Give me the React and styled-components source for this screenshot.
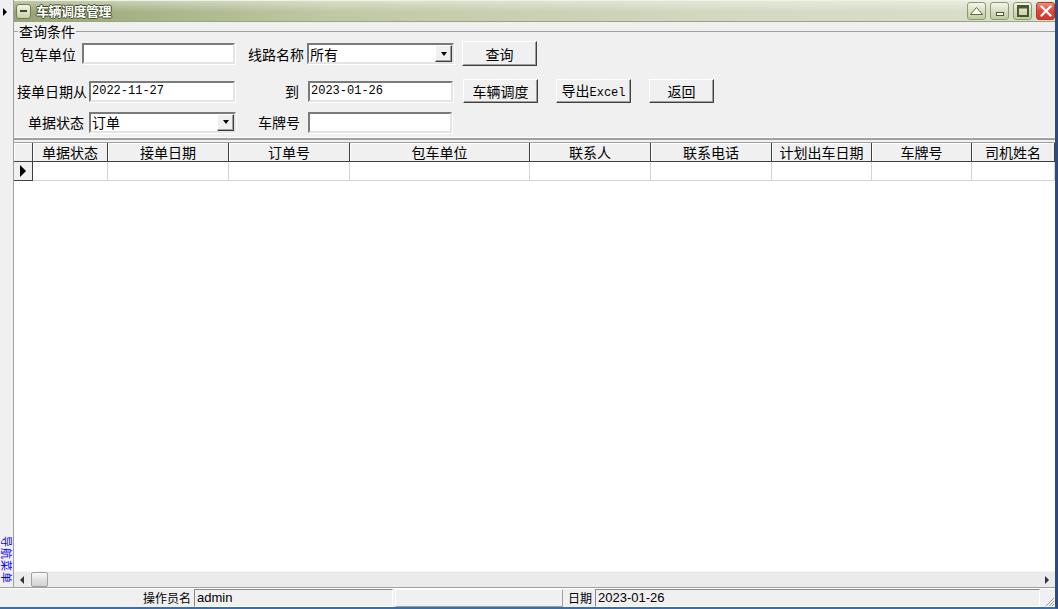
import React from "react"
import styled, { createGlobalStyle } from "styled-components"

const CJK = `"Noto Sans CJK SC", "Noto Sans", sans-serif`
const MONO = `"Liberation Mono", "Noto Sans CJK SC", monospace`
const UI = `"Liberation Sans", "Noto Sans CJK SC", sans-serif`

const GlobalStyle = createGlobalStyle`
  html, body {
    margin: 0;
    padding: 0;
    background: #f0f0f0;
  }
  body {
    font-family: ${CJK};
    font-size: 14px;
    color: #000;
  }
  * {
    box-sizing: border-box;
  }
`

const Frame = styled.div`
  width: 1058px;
  height: 609px;
  display: flex;
  flex-direction: column;
  border-right: 3px solid #2b4c7e;
  border-bottom: 2px solid #3d6fa6;
  background: #f0f0f0;
  overflow: hidden;
`

const Main = styled.div`
  flex: 1;
  display: flex;
  min-height: 0;
`

const NavStrip = styled.div`
  width: 14px;
  flex: none;
  border-right: 1px solid #a0a0a0;
  display: flex;
  flex-direction: column;
  justify-content: space-between;
  align-items: center;
  padding: 8px 0 3px 0;
`

const NavArrow = styled.span`
  width: 0;
  height: 0;
  margin-right: 4px;
  border-left: 4px solid #000;
  border-top: 4px solid transparent;
  border-bottom: 4px solid transparent;
`

const NavText = styled.span`
  writing-mode: vertical-rl;
  text-orientation: sideways;
  color: #0000ff;
  font-size: 11px;
  line-height: 12px;
  letter-spacing: 1px;
  white-space: nowrap;
`

const Window = styled.div`
  flex: 1;
  min-width: 0;
  display: flex;
  flex-direction: column;
`

const TitleBar = styled.div`
  height: 22px;
  flex: none;
  display: flex;
  align-items: center;
  padding-left: 2px;
  border-top: 1px solid #eef1e4;
  border-bottom: 1px solid #9aa47e;
  background:
    linear-gradient(to bottom, rgba(255, 255, 255, 0.4), rgba(255, 255, 255, 0) 55%),
    linear-gradient(to right, #96a473, #bfc8a4 30%, #d4d9c3 70%, #dadfcc);
`

const SysIcon = styled.span`
  width: 15px;
  height: 15px;
  margin-right: 5px;
  border: 1px solid #6f7f4c;
  border-radius: 3px;
  background: linear-gradient(#f2f4e8, #c8d0aa);
  display: flex;
  align-items: center;
  justify-content: center;

  &::after {
    content: "";
    width: 7px;
    height: 2px;
    background: #3e4a24;
  }
`

const Title = styled.span`
  color: #fff;
  font-weight: bold;
  font-size: 13px;
  line-height: 20px;
  letter-spacing: -0.5px;
  text-shadow: 1px 0 0 #3f4a26, -1px 0 0 #3f4a26, 0 1px 0 #3f4a26, 0 -1px 0 #3f4a26;
`

const CaptionGroup = styled.div`
  margin-left: auto;
  display: flex;
  gap: 4px;
`

const CaptionButton = styled.span`
  width: 19px;
  height: 18px;
  border-radius: 3px;
  border: 1px solid ${(p) => (p.$close ? "#b0382c" : "#8d9a6c")};
  background: ${(p) =>
    p.$close
      ? "linear-gradient(#f08a78, #e0463a 50%, #d23a2c)"
      : "linear-gradient(#f4f6ec, #d6dcc0 50%, #c2caa4)"};
  display: flex;
  align-items: center;
  justify-content: center;
`

const Body = styled.div`
  flex: 1;
  min-height: 0;
  display: flex;
  flex-direction: column;
`

const GroupBox = styled.fieldset`
  margin: 2px 0 0 0;
  padding: 0 0 5px 0;
  border: none;
  border-top: 1px solid #a0a0a0;
  border-bottom: 2px solid #a0a0a0;
  box-shadow: inset 0 -1px 0 #fff;
  flex: none;
`

const Legend = styled.legend`
  margin-left: 4px;
  padding: 0 1px;
  font-size: 14px;
  line-height: 14px;
`

const Row = styled.div`
  display: flex;
  align-items: center;
  height: ${(p) => p.$h}px;
  margin-top: ${(p) => p.$mt}px;
`

const Label = styled.span`
  width: ${(p) => p.$w}px;
  flex: none;
  text-align: right;
  padding-right: ${(p) => p.$pr}px;
  font-size: 14px;
  line-height: 16px;
  white-space: nowrap;
`

const Field = styled.div`
  width: ${(p) => p.$w}px;
  height: ${(p) => p.$h || 21}px;
  flex: none;
  display: flex;
  align-items: center;
  background: #fff;
  border-style: solid;
  border-width: 2px;
  border-color: #7a7a7a #e4e4e4 #e4e4e4 #7a7a7a;
  box-shadow: 1px 1px 0 #fff;
  padding-left: 1px;
  overflow: hidden;
  white-space: nowrap;
`

const FieldText = styled.span`
  flex: 1;
  font-family: ${(p) => (p.$mono ? MONO : CJK)};
  font-size: ${(p) => (p.$mono ? 12 : 14)}px;
  line-height: 16px;
`

const DropButton = styled.span`
  width: 17px;
  height: 17px;
  flex: none;
  background: #f0f0f0;
  border-style: solid;
  border-width: 1px;
  border-color: #fff #404040 #404040 #fff;
  box-shadow: inset -1px -1px 0 #a0a0a0;
  display: flex;
  align-items: center;
  justify-content: center;

  &::after {
    content: "";
    border-top: 4px solid #000;
    border-left: 3.5px solid transparent;
    border-right: 3.5px solid transparent;
  }
`

const Button = styled.button`
  width: ${(p) => p.$w}px;
  height: ${(p) => p.$h || 24}px;
  margin-left: ${(p) => p.$ml}px;
  flex: none;
  padding: 0;
  background: #f0f0f0;
  border-style: solid;
  border-width: 1px;
  border-color: #fff #404040 #404040 #fff;
  box-shadow: inset -1px -1px 0 #a0a0a0;
  font-family: ${CJK};
  font-size: 14px;
  line-height: 16px;
  color: #000;
  white-space: nowrap;
`

const Ascii = styled.span`
  font-family: ${MONO};
  font-size: 12px;
`

const Grid = styled.div`
  flex: 1;
  min-height: 0;
  margin-top: 2px;
  border-top: 1px solid #a0a0a0;
  background: #fff;
  overflow: hidden;
`

const Table = styled.table`
  table-layout: fixed;
  border-collapse: separate;
  border-spacing: 0;
  width: 1041px;
`

const HeadCell = styled.th`
  height: 19px;
  padding: 0;
  font-weight: normal;
  font-size: 14px;
  line-height: 17px;
  text-align: center;
  white-space: nowrap;
  overflow: hidden;
  background: #f0f0f0;
  border-right: 1px solid #404040;
  border-bottom: 1px solid #404040;
  box-shadow: inset 1px 1px 0 #fff;
`

const Cell = styled.td`
  height: 19px;
  padding: 0;
  font-size: 0;
  line-height: 0;
  background: ${(p) => (p.$indicator ? "#f0f0f0" : "#fff")};
  border-right: 1px solid ${(p) => (p.$indicator ? "#404040" : "#d4d4d4")};
  border-bottom: 1px solid ${(p) => (p.$indicator ? "#404040" : "#d4d4d4")};
`

const RowPointer = styled.span`
  display: block;
  width: 0;
  height: 0;
  margin-left: 6px;
  border-left: 6px solid #000;
  border-top: 6px solid transparent;
  border-bottom: 6px solid transparent;
`

const ScrollBar = styled.div`
  height: 16px;
  flex: none;
  display: flex;
  align-items: center;
  background: #ebebeb;
  border-top: 1px solid #f6f6f6;
`

const ScrollArrow = styled.span`
  width: 16px;
  height: 15px;
  flex: none;
  display: flex;
  align-items: center;
  justify-content: center;

  &::after {
    content: "";
    border-top: 4px solid transparent;
    border-bottom: 4px solid transparent;
    ${(p) => (p.$right ? "border-left: 4px solid #333;" : "border-right: 4px solid #333;")}
  }
`

const ScrollThumb = styled.span`
  width: 17px;
  height: 15px;
  margin-left: 1px;
  flex: none;
  border: 1px solid #a2a2a2;
  border-radius: 2px;
  background: linear-gradient(#fafafa, #e2e2e2 50%, #d2d2d2);
`

const ScrollTrack = styled.span`
  flex: 1;
`

const StatusBar = styled.div`
  height: 20px;
  flex: none;
  display: flex;
  align-items: stretch;
  border-top: 1px solid #a0a0a0;
  box-shadow: inset 0 1px 0 #fff;
  padding-top: 1px;
  background: #f0f0f0;
`

const StatusLabel = styled.span`
  width: ${(p) => p.$w}px;
  flex: none;
  text-align: right;
  padding-right: 1px;
  font-size: 12px;
  line-height: 18px;
`

const StatusPanel = styled.span`
  width: ${(p) => p.$w}px;
  margin-left: 2px;
  flex: none;
  border-style: solid;
  border-width: 1px;
  border-color: ${(p) => (p.$raised ? "#fff #a0a0a0 #a0a0a0 #fff" : "#8a8a8a #fff #fff #8a8a8a")};
  padding-left: 2px;
  font-family: ${UI};
  font-size: 13px;
  line-height: 16px;
  white-space: nowrap;
`

const Grip = styled.span`
  flex: 1;
  display: flex;
  justify-content: flex-end;
  align-items: flex-end;
`

const columns = [
  { key: "ind", w: 19, title: "" },
  { key: "status", w: 75, title: "单据状态" },
  { key: "date", w: 121, title: "接单日期" },
  { key: "no", w: 121, title: "订单号" },
  { key: "unit", w: 180, title: "包车单位" },
  { key: "contact", w: 121, title: "联系人" },
  { key: "phone", w: 121, title: "联系电话" },
  { key: "plan", w: 100, title: "计划出车日期" },
  { key: "plate", w: 100, title: "车牌号" },
  { key: "driver", w: 83, title: "司机姓名" },
]

const CaptionIcon = ({ kind }) => {
  if (kind === "up")
    return (
      <svg width="13" height="8" viewBox="0 0 13 8">
        <path d="M6.5 0.5 L12.5 7.5 L0.5 7.5 Z" fill="#fff" stroke="#5c6a3c" strokeWidth="1" />
      </svg>
    )
  if (kind === "min")
    return (
      <svg width="10" height="10" viewBox="0 0 10 10">
        <rect x="1.5" y="6.5" width="7" height="3" fill="#fff" stroke="#4a5830" />
      </svg>
    )
  if (kind === "max")
    return (
      <svg width="12" height="12" viewBox="0 0 12 12">
        <rect x="1" y="1" width="10" height="10" fill="none" stroke="#4a5830" strokeWidth="2" />
        <rect x="0.5" y="0.5" width="11" height="3" fill="#4a5830" />
      </svg>
    )
  return (
    <svg width="12" height="12" viewBox="0 0 12 12">
      <path d="M1.5 1.5 L10.5 10.5 M10.5 1.5 L1.5 10.5" stroke="#fff" strokeWidth="2.4" strokeLinecap="round" />
    </svg>
  )
}

const ResizeGrip = () => (
  <svg width="12" height="12" viewBox="0 0 12 12">
    <path d="M11 3 L3 11 M11 6 L6 11 M11 9 L9 11" stroke="#9a9a9a" strokeWidth="1" />
    <path d="M12 4 L4 12 M12 7 L7 12 M12 10 L10 12" stroke="#fff" strokeWidth="1" />
  </svg>
)

export default function App() {
  return (
    <>
      <GlobalStyle />
      <Frame>
        <Main>
          <NavStrip>
            <NavArrow />
            <NavText>导航菜单</NavText>
          </NavStrip>
          <Window>
            <TitleBar>
              <SysIcon />
              <Title>车辆调度管理</Title>
              <CaptionGroup>
                <CaptionButton>
                  <CaptionIcon kind="up" />
                </CaptionButton>
                <CaptionButton>
                  <CaptionIcon kind="min" />
                </CaptionButton>
                <CaptionButton>
                  <CaptionIcon kind="max" />
                </CaptionButton>
                <CaptionButton $close>
                  <CaptionIcon kind="close" />
                </CaptionButton>
              </CaptionGroup>
            </TitleBar>
            <Body>
              <GroupBox>
                <Legend>查询条件</Legend>
                <Row $h={25} $mt={3}>
                  <Label $w={68} $pr={6}>包车单位</Label>
                  <Field $w={153} />
                  <Label $w={72} $pr={3}>线路名称</Label>
                  <Field $w={147}>
                    <FieldText>所有</FieldText>
                    <DropButton />
                  </Field>
                  <Button $w={75} $h={25} $ml={8}>查询</Button>
                </Row>
                <Row $h={24} $mt={13}>
                  <Label $w={75} $pr={2}>接单日期从</Label>
                  <Field $w={146}>
                    <FieldText $mono>2022-11-27</FieldText>
                  </Field>
                  <Label $w={73} $pr={9}>到</Label>
                  <Field $w={145}>
                    <FieldText $mono>2023-01-26</FieldText>
                  </Field>
                  <Button $w={75} $ml={10}>车辆调度</Button>
                  <Button $w={75} $ml={18}>
                    导出<Ascii>Excel</Ascii>
                  </Button>
                  <Button $w={65} $ml={18}>返回</Button>
                </Row>
                <Row $h={22} $mt={8}>
                  <Label $w={75} $pr={5}>单据状态</Label>
                  <Field $w={147}>
                    <FieldText>订单</FieldText>
                    <DropButton />
                  </Field>
                  <Label $w={72} $pr={8}>车牌号</Label>
                  <Field $w={144} />
                </Row>
              </GroupBox>
              <Grid>
                <Table>
                  <colgroup>
                    {columns.map((c) => (
                      <col key={c.key} style={{ width: c.w }} />
                    ))}
                  </colgroup>
                  <thead>
                    <tr>
                      {columns.map((c) => (
                        <HeadCell key={c.key}>{c.title}</HeadCell>
                      ))}
                    </tr>
                  </thead>
                  <tbody>
                    <tr>
                      {columns.map((c) =>
                        c.key === "ind" ? (
                          <Cell key={c.key} $indicator>
                            <RowPointer />
                          </Cell>
                        ) : (
                          <Cell key={c.key} />
                        )
                      )}
                    </tr>
                  </tbody>
                </Table>
              </Grid>
              <ScrollBar>
                <ScrollArrow />
                <ScrollThumb />
                <ScrollTrack />
                <ScrollArrow $right />
              </ScrollBar>
            </Body>
          </Window>
        </Main>
        <StatusBar>
          <StatusLabel $w={192}>操作员名</StatusLabel>
          <StatusPanel $w={199}>admin</StatusPanel>
          <StatusPanel $w={168} $raised />
          <StatusLabel $w={30}>日期</StatusLabel>
          <StatusPanel $w={445}>2023-01-26</StatusPanel>
          <Grip>
            <ResizeGrip />
          </Grip>
        </StatusBar>
      </Frame>
    </>
  )
}
